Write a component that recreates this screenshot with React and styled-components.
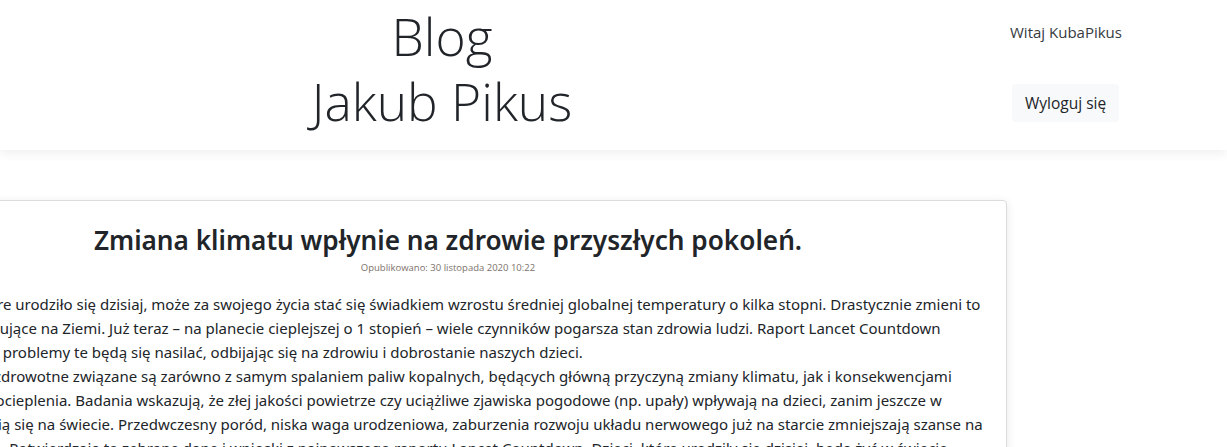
import React from "react";
import styled, { createGlobalStyle } from "styled-components";

const GlobalStyle = createGlobalStyle`
  html, body {
    margin: 0;
    padding: 0;
    background: #fff;
    overflow: hidden;
  }
  body {
    font-family: "Open Sans", "Noto Sans", "Liberation Sans", sans-serif;
    color: #212529;
  }
  * {
    box-sizing: border-box;
  }
`;

const paragraphs = [
  "Dziecko, które urodziło się dzisiaj, może za swojego życia stać się świadkiem wzrostu średniej globalnej temperatury o kilka stopni. Drastycznie zmieni to warunki panujące na Ziemi. Już teraz – na planecie cieplejszej o 1 stopień – wiele czynników pogarsza stan zdrowia ludzi. Raport Lancet Countdown pokazuje, że problemy te będą się nasilać, odbijając się na zdrowiu i dobrostanie naszych dzieci.",
  "Zagrożenia zdrowotne związane są zarówno z samym spalaniem paliw kopalnych, będących główną przyczyną zmiany klimatu, jak i konsekwencjami globalnego ocieplenia. Badania wskazują, że złej jakości powietrze czy uciążliwe zjawiska pogodowe (np. upały) wpływają na dzieci, zanim jeszcze w ogóle pojawią się na świecie. Przedwczesny poród, niska waga urodzeniowa, zaburzenia rozwoju układu nerwowego już na starcie zmniejszają szanse na zdrowe życie. Potwierdzają to zebrane dane i wnioski z najnowszego raportu Lancet Countdown. Dzieci, które urodziły się dzisiaj, będą żyć w świecie",
];

export default function App() {
  return (
    <>
      <GlobalStyle />
      <Header>
        <Brand>
          Blog
          <br />
          Jakub Pikus
        </Brand>
        <UserBox>
          <Greeting>Witaj KubaPikus</Greeting>
          <LogoutBtn>Wyloguj się</LogoutBtn>
        </UserBox>
      </Header>
      <Main>
        <PostCard>
          <PostTitle>Zmiana klimatu wpłynie na zdrowie przyszłych pokoleń.</PostTitle>
          <PostDate>Opublikowano: 30 listopada 2020 10:22</PostDate>
          <PostBody>
            {paragraphs.map((p, i) => (
              <p key={i}>{p}</p>
            ))}
          </PostBody>
        </PostCard>
      </Main>
    </>
  );
}

const Header = styled.header`
  height: 150px;
  background: #fff;
  display: flex;
  align-items: flex-start;
  box-shadow: 0 4px 10px rgba(0, 0, 0, 0.06);
  position: relative;
  z-index: 1;
`;

const Brand = styled.h1`
  width: 884px;
  margin: 0;
  padding-top: 4px;
  text-align: center;
  font-family: "Open Sans", "Noto Sans", sans-serif;
  font-weight: 300;
  font-size: 51.5px;
  line-height: 65px;
  color: #212529;
`;

const UserBox = styled.div`
  margin-left: 126px;
  padding-top: 20px;
  display: flex;
  flex-direction: column;
  align-items: flex-start;
`;

const Greeting = styled.span`
  font-size: 15px;
  line-height: 24px;
  color: #343a40;
`;

const LogoutBtn = styled.button`
  margin-top: 40px;
  margin-left: 2px;
  height: 38px;
  padding: 0 13px;
  border: none;
  border-radius: 4px;
  background: #f8f9fa;
  color: #212529;
  font-family: inherit;
  font-size: 15.5px;
`;

const Main = styled.main`
  padding-top: 50px;
`;

const PostCard = styled.article`
  width: 1116px;
  margin-left: -109px;
  background: #fff;
  border: 1px solid #dcdcdc;
  border-radius: 4px;
  box-shadow: 0 2px 10px rgba(0, 0, 0, 0.1);
  padding: 18px 22px 20px 20px;
`;

const PostTitle = styled.h2`
  margin: 0;
  text-align: center;
  font-family: "Noto Sans", "Open Sans", sans-serif;
  font-weight: 600;
  font-size: 26.2px;
  line-height: 42px;
  color: #212529;
`;

const PostDate = styled.div`
  text-align: center;
  font-size: 9.5px;
  line-height: 14px;
  color: #7d716b;
`;

const PostBody = styled.div`
  margin-top: 17px;
  font-family: "Noto Sans", "Open Sans", sans-serif;
  font-size: 15px;
  line-height: 24px;
  color: #212529;

  p {
    margin: 0;
  }
`;
